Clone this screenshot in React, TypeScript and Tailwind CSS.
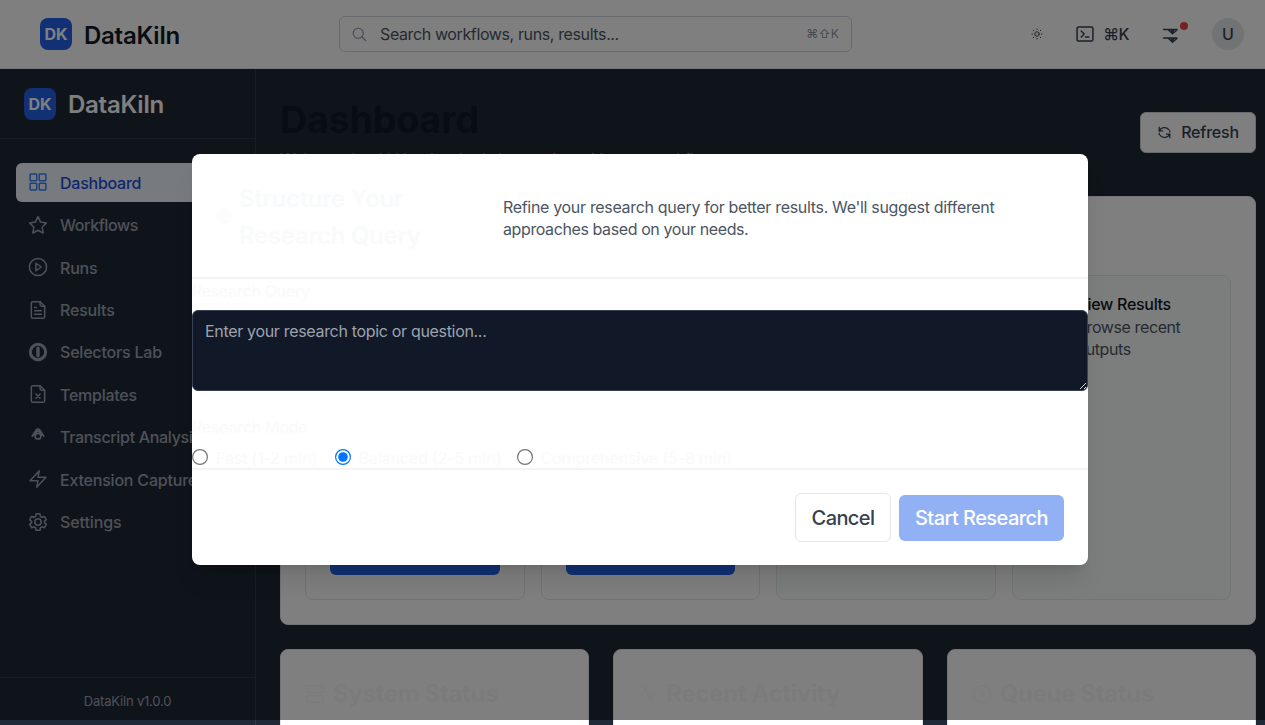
import type { ReactNode } from "react";

function Icon({ size = 20, sw = 1.5, className = "", children }: { size?: number; sw?: number; className?: string; children: ReactNode }) {
  return (
    <svg width={size} height={size} viewBox="0 0 24 24" fill="none" stroke="currentColor" strokeWidth={sw} strokeLinecap="round" strokeLinejoin="round" className={"shrink-0 " + className}>
      {children}
    </svg>
  );
}

const filePath = (
  <>
    <path d="M14.5 2H6a2 2 0 0 0-2 2v16a2 2 0 0 0 2 2h12a2 2 0 0 0 2-2V7.5z" />
    <path d="M14.5 2v3.5a2 2 0 0 0 2 2H20" />
  </>
);

const nav: { label: string; icon: ReactNode; ls: string }[] = [
  {
    label: "Dashboard",
    ls: "tracking-[-0.25px]",
    icon: (
      <>
        <rect x="2.5" y="2.5" width="8" height="8" rx="0.8" />
        <rect x="13.5" y="2.5" width="8" height="8" rx="0.8" />
        <rect x="2.5" y="13.5" width="8" height="8" rx="0.8" />
        <rect x="13.5" y="13.5" width="8" height="8" rx="0.8" />
      </>
    ),
  },
  { label: "Workflows", ls: "tracking-[-0.4px]", icon: <path d="M12 2l3.1 6.5 7 1-5.1 5 1.2 7.2L12 18.3l-6.2 3.4L7 14.5l-5.1-5 7-1z" /> },
  {
    label: "Runs",
    ls: "tracking-[-0.2px]",
    icon: (
      <>
        <circle cx="12" cy="12" r="10.3" />
        <path d="M9.5 7.5v9l6.5-4.5z" />
      </>
    ),
  },
  {
    label: "Results",
    ls: "tracking-[-0.2px]",
    icon: (
      <>
        {filePath}
        <path d="M8 9h2M8 13h8M8 17h8" />
      </>
    ),
  },
  {
    label: "Selectors Lab",
    ls: "tracking-[-0.2px]",
    icon: (
      <>
        <circle cx="12" cy="12" r="9.2" strokeWidth="3.6" />
        <path d="M12 7.5v9" strokeWidth="4" />
      </>
    ),
  },
  {
    label: "Templates",
    ls: "tracking-[-0.25px]",
    icon: (
      <>
        {filePath}
        <path d="M9.5 12l5 5M14.5 12l-5 5" />
      </>
    ),
  },
  {
    label: "Transcript Analysis",
    ls: "tracking-[-0.32px]",
    icon: (
      <>
        <circle cx="12" cy="11" r="3.4" strokeWidth="2" />
        <path d="M5 11L10 3.5q2-2 4 0l5 7.500M8 10l3.500-6M16 10l-3.500-6" strokeWidth="2" />
      </>
    ),
  },
  { label: "Extension Capture", ls: "tracking-[-0.2px]", icon: <path d="M13.5 2L2.5 14H12l-1.5 8L21.5 10H12z" /> },
  {
    label: "Settings",
    ls: "tracking-[-0.1px]",
    icon: (
      <>
        <circle cx="12" cy="12" r="3.8" />
        <path d="M9.7 2.2h4.6l.6 3 1.9 1.1 2.9-1 2.3 4-2.3 2v1.5l2.3 2-2.3 4-2.9-1-1.9 1.1-.6 3H9.7l-.6-3-1.9-1.1-2.9 1-2.3-4 2.3-2v-1.5l-2.3-2 2.3-4 2.9 1 1.9-1.1z" />
      </>
    ),
  },
];

function Logo({ text }: { text: string }) {
  return (
    <div className="flex items-center gap-3">
      <div className="flex h-8 w-8 items-center justify-center rounded-lg bg-[#2563eb] text-base font-bold tracking-[-0.1px] text-white">DK</div>
      <span className={"text-2xl font-semibold tracking-[-0.25px] " + text}>DataKiln</span>
    </div>
  );
}

function Header() {
  return (
    <header className="flex h-[69px] shrink-0 items-center border-b border-[#e5e7eb] bg-white pr-[21px] pl-10">
      <div className="w-[299px]">
        <Logo text="pt-[3px] text-[#111827]" />
      </div>
      <div className="flex h-9 w-[513px] items-center rounded-md border border-[#d1d5db] px-3">
        <Icon size={15} sw={1.8} className="text-[#8b93a1]">
          <circle cx="10" cy="10" r="8" />
          <path d="M16 16l6 6" />
        </Icon>
        <span className="ml-[13px] flex-1 text-base tracking-[-0.38px] text-[#4b5563]">Search workflows, runs, results...</span>
        <span className="text-xs tracking-[0.1px] text-[#8b93a1]">⌘⇧K</span>
      </div>
      <div className="ml-auto flex items-center text-[#374151]">
        <Icon size={12} sw={2}>
          <circle cx="12" cy="12" r="4.5" />
          <path d="M12 2v1M12 21v1M2 12h1M21 12h1M4.5 4.5l1 1M18.5 18.5l1 1M19.5 4.5l-1 1M5.5 18.5l-1 1" />
        </Icon>
        <div className="ml-8 flex items-center gap-2">
          <Icon sw={1.8}>
            <rect x="2.5" y="3.5" width="19" height="17" rx="2" />
            <path d="M7.5 8.5l3.5 3.5-3.5 3.5M12.5 15.5h4" />
          </Icon>
          <span className="text-base font-medium tracking-[-0.5px]">⌘K</span>
        </div>
        <div className="relative ml-8 h-5 w-5">
          <svg width="20" height="20" viewBox="0 0 20 20" fill="none" stroke="currentColor" strokeWidth="1.3" strokeLinecap="round" strokeLinejoin="round">
            <path d="M2.5 5.5h13.5M7.5 6l4 3.8L16 6M10 6l1.500 2 1.500-2" />
            <path d="M2.5 14h13.5M7.5 14.5l4 3.8L16 14.5M10 14.5l1.5 2 1.5-2" />
          </svg>
          <span className="absolute -top-[2px] left-[19px] h-2 w-2 rounded-full bg-[#ef4444]" />
        </div>
        <div className="ml-[31px] flex h-8 w-8 items-center justify-center rounded-full bg-[#e5e7eb] text-base font-medium">U</div>
      </div>
    </header>
  );
}

function Sidebar() {
  return (
    <aside className="flex w-64 shrink-0 flex-col border-r border-[#374151]/70 bg-[#1f2937]">
      <div className="flex h-[70px] shrink-0 items-center border-b border-[#374151]/70 px-6">
        <Logo text="pt-[2px] text-white" />
      </div>
      <nav className="flex flex-1 flex-col gap-1 px-4 pt-[24.2px]">
        {nav.map((item, i) => (
          <div key={item.label} className={"flex h-[38.4px] shrink-0 items-center gap-3 rounded-md px-3 text-base font-medium whitespace-nowrap " + (i === 0 ? "bg-[#eff6ff] text-[#1d4ed8]" : "text-[#9ca3af]")}>
            <Icon sw={1.8} className={i === 0 ? "text-[#3b82f6]" : ""}>{item.icon}</Icon>
            <span className={"pt-px " + item.ls}>{item.label}</span>
          </div>
        ))}
      </nav>
      <div className="flex h-12 shrink-0 items-center justify-center border-t border-[#374151]/70 text-[13px] tracking-[-0.2px] text-[#9ca3af]">DataKiln v1.0.0</div>
    </aside>
  );
}

function Action({ title, body, tinted, button }: { title: string; body: string; tinted?: boolean; button?: string }) {
  return (
    <div className={"flex flex-1 flex-col rounded-lg border p-6 " + (tinted ? "border-[#e6e9e8] bg-[#f9fcfa]" : "border-[#e5e7eb] bg-white")}>
      <div className="flex gap-4">
        <Icon size={24} className="text-[#2563eb]">{filePath}</Icon>
        <div className="-mt-[7px]">
          <h3 className="text-base leading-[23px] font-medium tracking-[-0.3px] whitespace-nowrap text-[#111827]">{title}</h3>
          <p className="text-base leading-[22px] tracking-[-0.4px] text-[#4b5563]">{body}</p>
        </div>
      </div>
      {button && <div className="mt-auto flex h-10 items-center justify-center rounded-md bg-[#2563eb] font-medium text-white">{button}</div>}
    </div>
  );
}

function StatusCard({ title, children }: { title: string; children: ReactNode }) {
  return (
    <div className="h-80 flex-1 rounded-lg border border-[#e5e7eb] bg-white px-6 pt-[25px] text-[#f6f7f7]">
      <div className="flex items-center gap-2">
        <Icon>{children}</Icon>
        <h2 className="text-2xl leading-[37px] font-bold tracking-[-0.35px]">{title}</h2>
      </div>
    </div>
  );
}

function Main() {
  return (
    <main className="flex flex-1 flex-col overflow-hidden bg-[#1f2937] pt-6 pr-[9px] pl-6">
      <div className="flex h-[103px] shrink-0 justify-between">
        <div>
          <h1 className="pt-[5px] text-[37.5px] leading-[44px] font-bold tracking-[-0.1px] text-[#111827]">Dashboard</h1>
          <p className="mt-[5px] text-base leading-6 tracking-[-0.4px] text-[#6b7280]">Welcome back! Here's what's happening with your workflows.</p>
        </div>
        <div className="mt-[19px] flex h-[41px] w-[116px] items-center justify-center gap-2 rounded-md border border-[#d1d5db] bg-white text-base font-medium tracking-[-0.2px] text-[#374151]">
          <Icon size={15} sw={2}>
            <path d="M3.5 10V3.5M3.5 9.5H9M3.5 9.5C6 4 14 1.5 19 7.5M20.5 14v6.5M20.5 14.5H15M20.5 14.5C18 20 10 22.5 5 16.5M20.5 9v2M3.5 13v2" />
          </Icon>
          <span className="-mt-px ml-px">Refresh</span>
        </div>
      </div>
      <section className="flex h-[429px] shrink-0 flex-col rounded-lg border border-[#e5e7eb] bg-white p-6">
        <h2 className="h-[54px] shrink-0 text-2xl font-semibold text-[#f9fafb]">Quick Actions</h2>
        <div className="flex flex-1 gap-4">
          <Action title="New Workflow" body="Create a workflow" button="Create" />
          <Action title="Run Research" body="Start a query" button="Start" />
          <Action title="Templates" body="Browse templates" tinted />
          <Action title="View Results" body="Browse recent outputs" tinted />
        </div>
      </section>
      <div className="mt-6 flex gap-6">
        <StatusCard title="System Status">
          <rect x="2" y="2" width="20" height="8" rx="2" />
          <rect x="2" y="14" width="20" height="8" rx="2" />
        </StatusCard>
        <StatusCard title="Recent Activity">
          <path d="M2 12h4l3-9 6 18 3-9h4" />
        </StatusCard>
        <StatusCard title="Queue Status">
          <circle cx="12" cy="12" r="10" />
          <path d="M12 6v6l3 2" />
        </StatusCard>
      </div>
    </main>
  );
}

function Radio({ label, on, width }: { label: string; on?: boolean; width: string }) {
  return (
    <label className="flex items-center gap-2">
      <svg width="16" height="16" viewBox="0 0 16 16" className="-mt-[2px] shrink-0" fill="none">
        <circle cx="8" cy="8" r="7.4" stroke={on ? "#0075ff" : "#767676"} strokeWidth="1.2" />
        {on && <circle cx="8" cy="8" r="4.8" fill="#0075ff" />}
      </svg>
      <span className={"text-base leading-5 font-medium tracking-[-0.2px] whitespace-nowrap text-[#f9fafb] " + width}>{label}</span>
    </label>
  );
}

function Modal() {
  return (
    <div role="dialog" className="mb-px flex h-[411px] w-[896px] flex-col rounded-lg bg-white shadow-xl">
      <div className="flex h-[125px] shrink-0 items-center border-b-2 border-[#f3f4f6] px-6 text-[#f9fafb]">
        <Icon size={16} className="mr-[7px]">
          <circle cx="12" cy="12" r="10" />
          <circle cx="12" cy="12" r="6" />
          <circle cx="12" cy="12" r="2" />
        </Icon>
        <h2 className="w-[264px] pt-[2px] text-2xl leading-[37px] font-semibold tracking-[-0.3px]">
          Structure Your
          <br />
          Research Query
        </h2>
        <p className="mt-[5px] flex-1 text-base leading-[22px] tracking-[-0.32px] text-[#4b5563]">
          Refine your research query for better results. We'll suggest different
          <br />
          <span className="tracking-[-0.4px]">approaches based on your needs.</span>
        </p>
      </div>
      <div className="flex h-[189px] shrink-0 flex-col">
        <div className="h-[31px] pt-[2px] text-base leading-5 font-medium tracking-[-0.35px] text-[#f9fafb]">Research Query</div>
        <div className="relative flex h-[81px] shrink-0 rounded-md border border-[#374151] bg-[#111827] px-3 pt-[8px] text-base leading-6 tracking-[-0.32px] text-[#9ca3af]">
          Enter your research topic or question...
          <svg width="8" height="8" viewBox="0 0 8 8" className="absolute right-0 bottom-0" stroke="#d1d5db" fill="none">
            <path d="M1 7l6-6M5 7l2-2" />
          </svg>
        </div>
        <div className="mt-[26px] text-base leading-5 font-medium tracking-[-0.3px] text-[#f9fafb]">Research Mode</div>
        <div className="mt-[11px] flex gap-4">
          <Radio label="Fast (1-2 min)" width="w-[102.5px]" />
          <Radio label="Balanced (2-5 min)" on width="w-[142px]" />
          <Radio label="Comprehensive (5-8 min)" width="w-[200px]" />
        </div>
      </div>
      <div className="flex flex-1 items-center justify-end gap-2 border-t-2 border-[#f3f4f6] px-6 text-xl font-medium">
        <div className="flex h-[49px] w-24 items-center justify-center rounded-md border-[1.5px] border-[#e5e7eb] tracking-[-0.6px] text-[#374151]">Cancel</div>
        <div className="flex h-[46px] w-[165px] items-center justify-center rounded-md bg-[#92b1f5] tracking-[-0.55px] whitespace-nowrap text-white">Start Research</div>
      </div>
    </div>
  );
}

export default function App() {
  return (
    <div className="relative flex h-[725px] w-[1265px] flex-col overflow-hidden bg-[#1f2937] font-['Inter',sans-serif]">
      <Header />
      <div className="flex min-h-0 flex-1">
        <Sidebar />
        <Main />
      </div>
      <div className="absolute top-0 left-0 flex h-[720px] w-[1280px] items-center justify-center bg-black/50">
        <Modal />
      </div>
    </div>
  );
}
